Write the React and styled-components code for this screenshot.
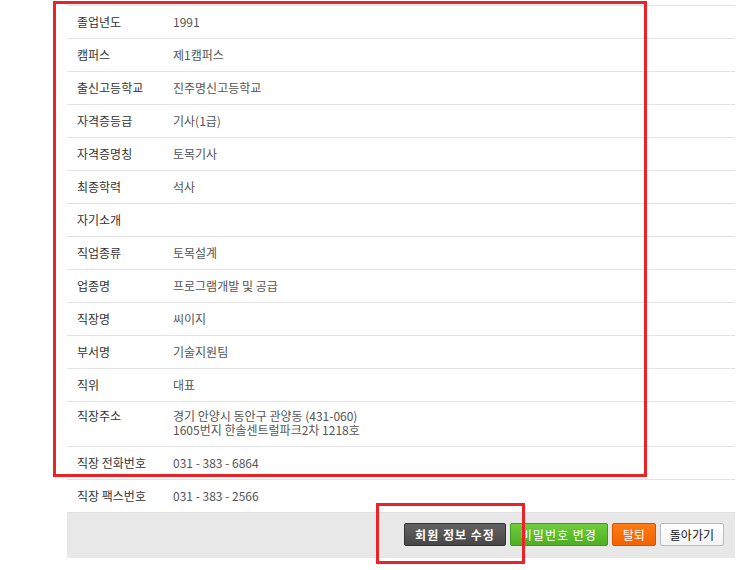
import React from 'react';
import styled, { createGlobalStyle } from 'styled-components';

const GlobalStyle = createGlobalStyle`
  html, body {
    margin: 0;
    padding: 0;
    background: #fff;
  }
  body {
    font-family: "Noto Sans CJK KR", "Noto Sans", sans-serif;
    font-size: 12px;
  }
`;

const Page = styled.div`
  position: relative;
  width: 739px;
  height: 570px;
  overflow: hidden;
`;

const InfoTable = styled.div`
  margin: 5px 4px 0 67px;
  border-top: 1px solid #e2e2e2;
`;

const Row = styled.div`
  display: grid;
  grid-template-columns: 106px 1fr;
  align-items: ${(p) => (p.tall ? 'start' : 'center')};
  box-sizing: border-box;
  height: ${(p) => (p.tall ? '45px' : '33px')};
  padding-top: ${(p) => (p.tall ? '7px' : '0')};
  padding-bottom: 1px;
  border-bottom: 1px solid #e2e2e2;
`;

const Label = styled.div`
  padding-left: 10px;
  color: #333;
  line-height: 14px;
  white-space: nowrap;
`;

const Value = styled.div`
  color: #555;
  line-height: 14px;
`;

const ButtonBar = styled.div`
  display: flex;
  justify-content: flex-end;
  align-items: center;
  gap: 4px;
  height: 45px;
  padding-right: 11px;
  background: #e8e8e8;
`;

const variants = {
  dark: {
    bg: 'linear-gradient(#626262, #474747)',
    border: '#333',
    color: '#fff',
  },
  green: {
    bg: 'linear-gradient(#6fcd3d, #4eae24)',
    border: '#3f9b1b',
    color: '#fff',
  },
  orange: {
    bg: 'linear-gradient(#ff7c14, #f26200)',
    border: '#d85200',
    color: '#fff',
  },
  white: {
    bg: 'linear-gradient(#fff, #f3f3f3)',
    border: '#bbb',
    color: '#111',
  },
};

const Button = styled.button`
  box-sizing: border-box;
  height: 23px;
  margin-top: -2px;
  padding: 0 ${(p) => p.pad || 8}px;
  border: 1px solid ${(p) => variants[p.kind].border};
  border-radius: 2px;
  background: ${(p) => variants[p.kind].bg};
  color: ${(p) => variants[p.kind].color};
  font-family: "Noto Sans CJK KR", sans-serif;
  font-size: 12px;
  font-weight: ${(p) => (p.bold ? 700 : 400)};
  letter-spacing: ${(p) => p.spacing || 0}px;
  line-height: 20px;
  cursor: pointer;
`;

const Highlight = styled.div`
  position: absolute;
  left: ${(p) => p.x}px;
  top: ${(p) => p.y}px;
  width: ${(p) => p.w}px;
  height: ${(p) => p.h}px;
  box-sizing: border-box;
  border: 3px solid #ec2227;
  pointer-events: none;
`;

const rows = [
  ['졸업년도', '1991'],
  ['캠퍼스', '제1캠퍼스'],
  ['출신고등학교', '진주명신고등학교'],
  ['자격증등급', '기사(1급)'],
  ['자격증명칭', '토목기사'],
  ['최종학력', '석사'],
  ['자기소개', ''],
  ['직업종류', '토목설계'],
  ['업종명', '프로그램개발 및 공급'],
  ['직장명', '씨이지'],
  ['부서명', '기술지원팀'],
  ['직위', '대표'],
];

function App() {
  return (
    <Page>
      <GlobalStyle />
      <InfoTable>
        {rows.map(([label, value]) => (
          <Row key={label}>
            <Label>{label}</Label>
            <Value>{value}</Value>
          </Row>
        ))}
        <Row tall>
          <Label>직장주소</Label>
          <Value>
            경기 안양시 동안구 관양동 (431-060)
            <br />
            1605번지 한솔센트럴파크2차 1218호
          </Value>
        </Row>
        <Row>
          <Label>직장 전화번호</Label>
          <Value>031 - 383 - 6864</Value>
        </Row>
        <Row>
          <Label>직장 팩스번호</Label>
          <Value>031 - 383 - 2566</Value>
        </Row>
        <ButtonBar>
          <Button kind="dark" bold spacing={1} pad={10}>회원 정보 수정</Button>
          <Button kind="green" spacing={1} pad={10}>비밀번호 변경</Button>
          <Button kind="orange" pad={10}>탈퇴</Button>
          <Button kind="white" pad={9}>돌아가기</Button>
        </ButtonBar>
      </InfoTable>
      <Highlight x={53} y={1} w={594} h={476} />
      <Highlight x={376} y={503} w={149} h={61} />
    </Page>
  );
}

export default App;
